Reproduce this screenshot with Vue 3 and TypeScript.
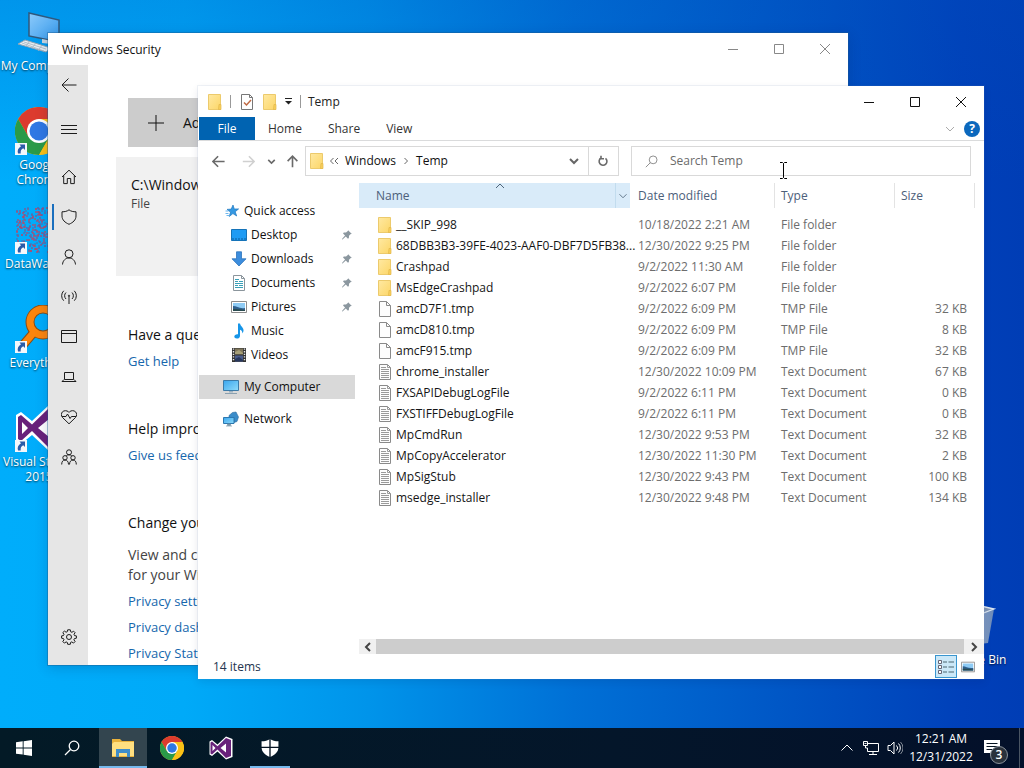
<script setup lang="ts">
import { ref } from 'vue'

interface FileRow {
  name: string
  date: string
  type: string
  size: string
  icon: 'folder' | 'blank' | 'text'
}

const folder = (name: string, date: string): FileRow => ({ name, date, type: 'File folder', size: '', icon: 'folder' })
const tmp = (name: string, date: string, size: string): FileRow => ({ name, date, type: 'TMP File', size, icon: 'blank' })
const text = (name: string, date: string, size: string): FileRow => ({ name, date, type: 'Text Document', size, icon: 'text' })

const files: FileRow[] = [
  folder('__SKIP_998', '10/18/2022 2:21 AM'),
  folder('68DBB3B3-39FE-4023-AAF0-DBF7D5FB38...', '12/30/2022 9:25 PM'),
  folder('Crashpad', '9/2/2022 11:30 AM'),
  folder('MsEdgeCrashpad', '9/2/2022 6:07 PM'),
  tmp('amcD7F1.tmp', '9/2/2022 6:09 PM', '32 KB'),
  tmp('amcD810.tmp', '9/2/2022 6:09 PM', '8 KB'),
  tmp('amcF915.tmp', '9/2/2022 6:09 PM', '32 KB'),
  text('chrome_installer', '12/30/2022 10:09 PM', '67 KB'),
  text('FXSAPIDebugLogFile', '9/2/2022 6:11 PM', '0 KB'),
  text('FXSTIFFDebugLogFile', '9/2/2022 6:11 PM', '0 KB'),
  text('MpCmdRun', '12/30/2022 9:53 PM', '32 KB'),
  text('MpCopyAccelerator', '12/30/2022 11:30 PM', '2 KB'),
  text('MpSigStub', '12/30/2022 9:43 PM', '100 KB'),
  text('msedge_installer', '12/30/2022 9:48 PM', '134 KB'),
]

const quick = [
  { label: 'Desktop', icon: 'desktop', pinned: true },
  { label: 'Downloads', icon: 'download', pinned: true },
  { label: 'Documents', icon: 'document', pinned: true },
  { label: 'Pictures', icon: 'picture', pinned: true },
  { label: 'Music', icon: 'music', pinned: false },
  { label: 'Videos', icon: 'video', pinned: false },
]

const shortcuts = [
  { label: 'My\u00a0Computer', icon: 'bigpc', link: false },
  { label: 'Google Chrome', icon: 'chrome', link: true },
  { label: 'DataWagers', icon: 'noise', link: true },
  { label: 'Everything', icon: 'everything', link: true },
  { label: 'Visual Studio 2015', icon: 'vs', link: true },
]

const sections = [
  { label: 'Home', icon: 'home' },
  { label: 'Virus & threat protection', icon: 'shield' },
  { label: 'Account protection', icon: 'person' },
  { label: 'Firewall', icon: 'antenna' },
  { label: 'App & browser control', icon: 'window' },
  { label: 'Device security', icon: 'laptop' },
  { label: 'Device health', icon: 'heart' },
  { label: 'Family options', icon: 'family' },
]

const query = ref('')
const selectedPlace = ref('My Computer')

// Deterministic scatter for the speckled shortcut icon
const scatter = (n: number) => {
  const v = Math.sin(n * 12.9898) * 43758.5453
  return v - Math.floor(v)
}
const specks = Array.from({ length: 300 }, (_, i) => ({
  x: 1 + Math.floor(scatter(i + 1) * 45),
  y: 1 + Math.floor(scatter(i + 701) * 45),
  c: ['#c8405c', '#8a4f88', '#4f6fb4', '#b04a6c'][i % 4],
}))
</script>

<template>
  <svg class="sprite" aria-hidden="true">
    <defs>
      <linearGradient id="g-folder" x1="0" y1="0" x2="1" y2="1"><stop offset="0" stop-color="#ffe9a2" /><stop offset="1" stop-color="#fcd668" /></linearGradient>
      <linearGradient id="g-screen" x1="0" y1="0" x2="1" y2="1"><stop offset="0" stop-color="#3ba6ee" /><stop offset="1" stop-color="#8fdcfb" /></linearGradient>
      <linearGradient id="g-pc" x1="0" y1="0" x2="1" y2="1"><stop offset="0" stop-color="#8ecbfb" /><stop offset="1" stop-color="#2f96ea" /></linearGradient>
      <linearGradient id="g-bin" x1="0" y1="0" x2="1" y2="0"><stop offset="0" stop-color="#c9d3df" /><stop offset="1" stop-color="#7e97b8" /></linearGradient>
    </defs>
    <symbol id="folder" viewBox="0 0 16 16"><path d="M1.500.5h12v15h-12z" fill="url(#g-folder)" stroke="#ecca6c" /><path d="M12 10.500h2v5h-2.500z" fill="#f9cf5c" stroke="#e3b84a" stroke-width=".7" /></symbol>
    <symbol id="blank" viewBox="0 0 16 16"><path d="M2.500.5h7l4 4v11h-11z" fill="#fdfdfd" stroke="#8a8a8a" /><path d="M9.500.5v4h4" fill="none" stroke="#8a8a8a" /></symbol>
    <symbol id="text" viewBox="0 0 16 16"><path d="M2.500.5h8l3 3v12h-11z" fill="#fdfdfd" stroke="#8a8a8a" /><path d="M10.500.5v3h3M4 3.500h5M4 5.500h8M4 7.500h8M4 9.500h8M4 11.500h8M4 13.500h8" fill="none" stroke="#9a9a9a" /></symbol>
    <symbol id="desktop" viewBox="0 0 16 16"><path d="M.5 2.500h15v11H.5z" fill="#1e9bf4" stroke="#1573b8" /><path d="M1 12h14" stroke="#0b5d9d" stroke-dasharray="2 1" /></symbol>
    <symbol id="download" viewBox="0 0 16 16"><path d="M5.500.8h5v7h4.500L8 15 1 7.800h4.500z" fill="#3c8ddd" stroke="#2c73bb" stroke-width=".8" /></symbol>
    <symbol id="document" viewBox="0 0 16 16"><path d="M2.500.5h8l3 3v12h-11z" fill="#fff" stroke="#8b959c" /><path d="M10.500.5v3h3" fill="none" stroke="#8b959c" /><path d="M4 4.500h4M4 6.500h3M8 6.500h4M4 8.500h8M4 10.500h3M8 10.500h4M4 12.500h8" stroke="#3aa0b8" /></symbol>
    <symbol id="picture" viewBox="0 0 16 16"><path d="M.5 2.500h15v11H.5z" fill="#fff" stroke="#8c8c8c" /><path d="M2 4h12v8H2z" fill="#8ecbf5" /><path d="M2 7c4 0 6 3 12 2v3H2z" fill="#2f5f8c" /><path d="M2 10c4 0 7 0 12 1v1H2z" fill="#294b50" /></symbol>
    <symbol id="music" viewBox="0 0 16 16"><path d="M7 .5h2c.5 3 4 4 3.500 7.500-.2 1-.6 1.800-1.200 2.500.3-2-.8-3.200-2.300-3.800V13c0 1.700-1.500 2.600-3.200 2.600-1.500 0-2.500-.8-2.500-2 0-1.600 1.700-2.600 3.700-2.300z" fill="#1695e8" /></symbol>
    <symbol id="video" viewBox="0 0 16 16"><path d="M1 1h14v14H1z" fill="#333" /><path d="M4 1.500h8v6H4z" fill="#7f765a" /><path d="M4 8.500h8v6H4z" fill="#4a5c8c" /><path d="M4 5l4-2 4 3v1H4z" fill="#a7a078" /><path d="M4 12l4-2 4 3v1H4z" fill="#27375c" /><path d="M2.500 1.500v13M13.500 1.500v13" stroke="#e8e8e8" stroke-width="1.400" stroke-dasharray="1.300 1.300" /></symbol>
    <symbol id="star" viewBox="0 0 16 16"><path d="M9 2l1.300 4 4.300-.1-3.400 2.900 1.500 4.200-3.800-2.400-3.600 2.900 1.200-4.400L3 6.400l4.200-.3z" fill="#3498e2" stroke="#1f78c0" stroke-width=".7" /><path d="M1.500 8h3M1.500 10.500h3M2.500 12.500h3" stroke="#6cb7ee" /></symbol>
    <symbol id="computer" viewBox="0 0 16 16"><path d="M.5 1.500h15v10H.5z" fill="url(#g-screen)" stroke="#3c7ba8" /><path d="M6 12h4v1.500H6z" fill="#9db2c0" /><path d="M2 14.500h12" stroke="#8aa0b0" /></symbol>
    <symbol id="network" viewBox="0 0 16 16"><path d="M6 4.500L9.500 1.500 13 1l2.500 5L14 10.500l-3 1V6.500H6z" fill="#3a8cc9" stroke="#2b6c9f" stroke-width=".6" /><path d="M.5 6.500h10.500v6H.5z" fill="url(#g-screen)" stroke="#2c78b0" /><path d="M4.500 13h3v1.500h-3zM3 15h6" fill="#7895a8" stroke="#7895a8" stroke-width=".7" /></symbol>
    <symbol id="pin" viewBox="0 0 16 16"><path d="M9.500 1.500l5 5-1.500.3-2.300 2.300-.2 3-1.200.9-2.900-2.900L2 14l-.7-.2.300-.9 3.800-4.400L2.700 6l1-1.200 3 0 2.400-2z" fill="#8b979f" /></symbol>

    <symbol id="home" viewBox="0 0 16 16"><path d="M1 8l7-6.800L15 8M2.700 6.600v8h3.600V9.500h3.400v5.100h3.600v-8" /></symbol>
    <symbol id="shield" viewBox="0 0 16 16"><path d="M8 .8c2 1.600 4.300 2 7 2V7c0 4-3 6.500-7 8.300C4 13.500 1 11 1 7V2.800c2.700 0 5-.4 7-2z" /></symbol>
    <symbol id="person" viewBox="0 0 16 16"><circle cx="8" cy="4.800" r="4" /><path d="M1.500 15.500c.3-4 3-6.500 6.500-6.500s6.200 2.500 6.500 6.500" /></symbol>
    <symbol id="antenna" viewBox="0 0 16 16"><path d="M8 7v8M5 3.500a4.500 4.500 0 0 0 0 6.500M11 3.500a4.500 4.500 0 0 1 0 6.500M2.700 1.800a7 7 0 0 0 0 9.900M13.300 1.800a7 7 0 0 1 0 9.900" /><circle cx="8" cy="6.700" r=".6" /></symbol>
    <symbol id="window" viewBox="0 0 16 16"><path d="M.5 1.500h15v12H.5zM.5 4.500h15" /></symbol>
    <symbol id="laptop" viewBox="0 0 16 16"><path d="M3.500 3.500h9v7h-9zM3 10.500l-2 2h14l-2-2" /></symbol>
    <symbol id="heart" viewBox="0 0 16 16"><path d="M8 14.800L1.500 8.500C0 6.800 0 4.300 1.500 2.800s4.300-1.400 6 0L8 3.300l.5-.5c1.700-1.500 4.500-1.500 6 0s1.500 4 0 5.700zM1 7.500h4L6.500 5l2.600 4.500 1.300-2H15" /></symbol>
    <symbol id="family" viewBox="0 0 16 16"><circle cx="8" cy="3.300" r="2.500" /><circle cx="4" cy="8.800" r="2.200" /><circle cx="12" cy="8.800" r="2.200" /><path d="M.7 15.500c0-3 1.300-4.500 3.300-4.500s3.500 1.500 3.500 4.500M8.500 15.500c0-3 1.500-4.500 3.500-4.500s3.300 1.500 3.300 4.500M5.300 6.800c.6-.7 1.500-1 2.700-1s2.100.3 2.700 1" /></symbol>
    <symbol id="gear" viewBox="0 0 16 16"><circle cx="8" cy="8" r="2.500" /><path d="M6.700.8h2.600l.4 2 1.200.5 1.700-1.100 1.500 1.500L13 5.300l.5 1.300 1.900.3v2.300l-2 .4-.5 1.200 1.200 1.700-1.600 1.600-1.700-1.200-1.200.5-.3 1.900H6.700l-.4-1.900-1.200-.5-1.700 1.200-1.600-1.600L3 10.800l-.5-1.200-1.900-.4V6.900l1.900-.4.500-1.200-1.200-1.700 1.600-1.500 1.700 1.100 1.200-.5z" /></symbol>

    <symbol id="bigpc" viewBox="0 0 48 48"><path d="M14 5l30 7v22l-30-6z" fill="url(#g-pc)" stroke="#30587c" stroke-width="1.500" /><path d="M27 31l10 2v3l-10-1z" fill="#c8d5df" /><path d="M10 32l26 8-5 4L3 36z" fill="#e9eef2" stroke="#90a4b4" /><path d="M9 34l22 7M7 35l22 8M15 33l-4 5M21 35l-4 5M27 37l-4 6" stroke="#a5b5c2" stroke-width=".8" /></symbol>
    <symbol id="chrome" viewBox="0 0 48 48"><circle cx="24" cy="24" r="24" fill="#fbc116" /><path d="M3.200 12A24 24 0 0 1 44.800 12H24L13.600 30z" fill="#dc3b2e" /><path d="M3.200 12A24 24 0 0 0 24 48L34.400 30H13.600z" fill="#2a9a48" /><path d="M24 12h20.800A24 24 0 0 1 24 48l10.400-18z" fill="#fbc116" /><circle cx="24" cy="24" r="12" fill="#fff" /><circle cx="24" cy="24" r="9.500" fill="#2f78e4" /></symbol>
    <symbol id="everything" viewBox="0 0 48 48"><circle cx="28" cy="17" r="13" fill="none" stroke="#8a4b12" stroke-width="9" /><path d="M20 26L8 40" stroke="#8a4b12" stroke-width="9" /><circle cx="28" cy="17" r="13" fill="none" stroke="#fb850c" stroke-width="7" /><path d="M20 26L9 39" stroke="#fb850c" stroke-width="7" /></symbol>
    <symbol id="vs" viewBox="0 0 48 48"><path d="M34 1l13 5v36l-13 5-17-16L6 40l-5-3V11l5-3 11 9z" fill="#fff" /><path d="M34 4l10 4v32l-10 4-17-17L6 37l-3-2V13l3-2 11 9.500zM7 18v12l6-6zM34 15L23 24l11 9z" fill="#68217a" fill-rule="evenodd" /></symbol>
    <symbol id="bin" viewBox="0 0 48 48"><path d="M8 6l22-2 13 3-6 34-16 2-8-4z" fill="url(#g-bin)" opacity=".85" /><path d="M8 6l22-2 13 3-16 6z" fill="#8095b4" stroke="#dce6f0" stroke-width="1.300" /></symbol>
    <symbol id="arrow-left" viewBox="0 0 16 16"><path d="M15.500 8H1.500M7.500 1.500L1 8l6.500 6.500" /></symbol>
    <symbol id="chevron" viewBox="0 0 16 16"><path d="M4 6l4 4 4-4" /></symbol>
    <symbol id="lens" viewBox="0 0 16 16"><circle cx="10" cy="6" r="4.800" /><path d="M6.500 9.500L1 15" /></symbol>
  </svg>

  <div class="screen">
    <main class="desktop">
      <div class="shortcuts">
        <button v-for="s in shortcuts" :key="s.label" class="shortcut">
          <span class="art">
            <svg v-if="s.icon === 'noise'" viewBox="0 0 48 48"><rect v-for="(p, i) in specks" :key="i" :x="p.x" :y="p.y" width="2" height="2" :fill="p.c" opacity=".6" /></svg>
            <svg v-else><use :href="'#' + s.icon" /></svg>
            <svg v-if="s.link" class="link-mark" viewBox="0 0 12 12"><path d="M0 0h12v12H0z" fill="#f4f7fb" /><path d="M4.500 1.500H10v5.500L8.200 5.300C6 6.500 5.500 8 5.700 10.500H3C2 7.500 3.300 4.800 6 3.200z" fill="#2a5ba8" /></svg>
          </span>
          <span class="caption">{{ s.label }}</span>
        </button>
      </div>
      <button class="shortcut bin">
        <span class="art"><svg><use href="#bin" /></svg></span>
        <span class="caption">Recycle Bin</span>
      </button>

      <section class="win security" aria-label="Windows Security">
        <header class="titlebar">
          <span class="title">Windows Security</span>
          <div class="controls">
            <button aria-label="Minimize"><svg viewBox="0 0 12 12"><path d="M1 6.500h10" /></svg></button>
            <button aria-label="Maximize"><svg viewBox="0 0 12 12"><path d="M1.500 1.500h9v9h-9z" /></svg></button>
            <button aria-label="Close"><svg viewBox="0 0 12 12"><path d="M1 1l10 10M11 1L1 11" /></svg></button>
          </div>
        </header>
        <div class="sec-body">
          <nav class="rail" aria-label="Sections">
            <button aria-label="Back"><svg><use href="#arrow-left" /></svg></button>
            <button class="menu" aria-label="Menu"><svg viewBox="0 0 16 16"><path d="M0 4.500h16M0 8.500h16M0 12.500h16" /></svg></button>
            <button v-for="s in sections" :key="s.icon" :class="{ current: s.icon === 'shield' }" :aria-label="s.label"><svg><use :href="'#' + s.icon" /></svg></button>
            <button class="settings" aria-label="Settings"><svg><use href="#gear" /></svg></button>
          </nav>
          <div class="sec-content">
            <button class="add"><svg viewBox="0 0 16 16"><path d="M8 0v16M0 8h16" /></svg>Add an exclusion</button>
            <div class="exclusion"><div class="path">C:\Windows\Temp</div><div class="kind">File</div></div>
            <div class="group">
              <h2>Have a question?</h2>
              <a href="#help">Get help</a>
            </div>
            <div class="group">
              <h2>Help improve Windows Security</h2>
              <a href="#feedback">Give us feedback</a>
            </div>
            <div class="group">
              <h2>Change your privacy settings</h2>
              <p>View and change privacy settings<br>for your Windows 10 device.</p>
              <a href="#settings">Privacy settings</a>
              <a href="#dashboard">Privacy dashboard</a>
              <a href="#statement">Privacy Statement</a>
            </div>
          </div>
        </div>
      </section>

      <section class="win explorer" aria-label="Temp">
        <header class="titlebar">
          <div class="quickbar">
            <svg><use href="#folder" /></svg>
            <i class="bar"></i>
            <button aria-label="Properties"><svg viewBox="0 0 16 16"><path d="M2.500.5h8l3 3v12h-11z" fill="#fff" stroke="#777" /><path d="M10.500.5v3h3" fill="none" stroke="#777" /><path d="M5 8.500L7.500 11 12 6" fill="none" stroke="#c06a44" stroke-width="1.500" /></svg></button>
            <button aria-label="New folder"><svg><use href="#folder" /></svg></button>
            <button class="more" aria-label="Customize"><svg viewBox="0 0 9 9"><path d="M1 1.500h7" stroke="#222" /><path d="M1 4h7L4.500 7.500z" fill="#222" /></svg></button>
            <i class="bar"></i>
          </div>
          <span class="title">Temp</span>
          <div class="controls">
            <button aria-label="Minimize"><svg viewBox="0 0 12 12"><path d="M1 6.500h10" /></svg></button>
            <button aria-label="Maximize"><svg viewBox="0 0 12 12"><path d="M1.500 1.500h9v9h-9z" /></svg></button>
            <button aria-label="Close"><svg viewBox="0 0 12 12"><path d="M1 1l10 10M11 1L1 11" /></svg></button>
          </div>
        </header>
        <div class="tabs">
          <button class="file">File</button>
          <button>Home</button>
          <button>Share</button>
          <button>View</button>
          <div class="tabs-end">
            <button class="expand" aria-label="Expand ribbon"><svg><use href="#chevron" /></svg></button>
            <button class="help" aria-label="Help">?</button>
          </div>
        </div>
        <div class="addressrow">
          <div class="travel">
            <button aria-label="Back"><svg><use href="#arrow-left" /></svg></button>
            <button class="off" aria-label="Forward"><svg viewBox="0 0 16 16"><path d="M1 8h13.500M8.500 1.500L15 8l-6.500 6.500" /></svg></button>
            <button class="recent" aria-label="Recent"><svg><use href="#chevron" /></svg></button>
            <button class="up" aria-label="Up"><svg viewBox="0 0 16 16"><path d="M8 15V2M2 7.500l6-6 6 6" /></svg></button>
          </div>
          <div class="address">
            <svg class="fold"><use href="#folder" /></svg>
            <svg class="sep wide" viewBox="0 0 10 10"><path d="M4.500 2l-3 3 3 3M9 2L6 5l3 3" /></svg>
            <button>Windows</button>
            <svg class="sep" viewBox="0 0 10 10"><path d="M3.500 2l3 3-3 3" /></svg>
            <button>Temp</button>
            <button class="drop" aria-label="Previous locations"><svg><use href="#chevron" /></svg></button>
            <button class="refresh" aria-label="Refresh"><svg viewBox="0 0 12 12"><path d="M8.500 3.300A3.900 3.900 0 1 1 4 3M4 .8v2.900h3" /></svg></button>
          </div>
          <label class="search">
            <svg><use href="#lens" /></svg>
            <input v-model="query" type="text" placeholder="Search Temp" aria-label="Search Temp">
          </label>
        </div>
        <div class="ex-body">
          <nav class="tree" aria-label="Places">
            <button class="place"><svg><use href="#star" /></svg>Quick access</button>
            <button v-for="q in quick" :key="q.label" class="place sub"><svg><use :href="'#' + q.icon" /></svg>{{ q.label }}<svg v-if="q.pinned" class="pin"><use href="#pin" /></svg></button>
            <button class="place root" :class="{ selected: selectedPlace === 'My Computer' }" @click="selectedPlace = 'My Computer'"><svg><use href="#computer" /></svg>My Computer</button>
            <button class="place root" :class="{ selected: selectedPlace === 'Network' }" @click="selectedPlace = 'Network'"><svg><use href="#network" /></svg>Network</button>
          </nav>
          <div class="list">
            <table>
              <colgroup><col><col class="c-date"><col class="c-type"><col class="c-size"></colgroup>
              <thead>
                <tr>
                  <th class="sorted" aria-sort="ascending">
                    <div class="name-head"><span>Name</span><button aria-label="Filter by name"><svg><use href="#chevron" /></svg></button></div>
                    <svg class="sort-mark" viewBox="0 0 10 6"><path d="M1 5l4-4 4 4" /></svg>
                  </th>
                  <th>Date modified</th>
                  <th>Type</th>
                  <th>Size</th>
                </tr>
              </thead>
              <tbody>
                <tr v-for="f in files" :key="f.name">
                  <td><div class="name"><svg><use :href="'#' + f.icon" /></svg>{{ f.name }}</div></td>
                  <td>{{ f.date }}</td>
                  <td>{{ f.type }}</td>
                  <td class="size">{{ f.size }}</td>
                </tr>
              </tbody>
            </table>
            <div class="scroll">
              <button class="left" aria-label="Scroll left"><svg><use href="#chevron" /></svg></button>
              <div class="thumb"></div>
              <button class="right" aria-label="Scroll right"><svg><use href="#chevron" /></svg></button>
            </div>
          </div>
        </div>
        <footer class="status">
          <span>14 items</span>
          <div class="views">
            <button class="on" aria-label="Details"><svg viewBox="0 0 16 16"><path d="M.5 1.500h3v3h-3zM.5 6.500h3v3h-3zM.5 11.500h3v3h-3z" fill="#fff" stroke="#667" /><path d="M5 3h4M10.500 3H16M5 8h4M10.500 8H16M5 13h4M10.500 13H16" stroke="#4c6670" stroke-width="1.200" /></svg></button>
            <button aria-label="Large icons"><svg><use href="#picture" /></svg></button>
          </div>
        </footer>
      </section>
      <svg class="cursor" viewBox="0 0 9 17"><path d="M1 .5h2.500l1 1 1-1H8M4.500 1.500v14M1 16.500h2.500l1-1 1 1H8" /></svg>
    </main>

    <footer class="taskbar">
      <button aria-label="Start"><svg class="start" viewBox="0 0 16 16"><path d="M0 2.300l6.700-1v6.200H0zM7.600 1.200L16 0v7.500H7.600zM0 8.400h6.700v6.200L0 13.700zM7.600 8.400H16V16l-8.400-1.200z" fill="#fff" /></svg></button>
      <button aria-label="Search"><svg class="find"><use href="#lens" /></svg></button>
      <div class="apps">
        <button class="active" aria-label="File Explorer"><svg viewBox="0 0 24 24"><path d="M1 3h8l2 2h12v16H1z" fill="#e9b23c" /><path d="M3 6h20v14H1V8z" fill="#ffdf80" /><path d="M5 13h14v8h-3v-4H8v4H5z" fill="#3f8dc9" /></svg></button>
        <button aria-label="Google Chrome"><svg><use href="#chrome" /></svg></button>
        <button aria-label="Visual Studio"><svg><use href="#vs" /></svg></button>
        <button class="open" aria-label="Windows Security"><svg class="guard" viewBox="0 0 16 16"><path d="M8 0c2 1.500 4.500 2 7.500 2v5c0 4.500-3 7-7.500 9C3.500 14 .5 11.500.5 7V2C3.500 2 6 1.500 8 0z" fill="#fff" /><path d="M8 0v16M0 7.500h16" stroke="#071524" stroke-width="1.200" /></svg></button>
      </div>
      <div class="tray">
        <button aria-label="Show hidden icons"><svg viewBox="0 0 16 16"><path d="M2.500 10.500L8 5l5.500 5.500" /></svg></button>
        <button aria-label="Network"><svg viewBox="0 0 16 16"><path d="M5 3.500h10.500v8H4.500V8M.5 1.500h4v4h-4zM2.500 5.500V8h2M10 11.500v3M6 14.500h8M1.500 3.500h2" /></svg></button>
        <button aria-label="Volume"><svg viewBox="0 0 16 16"><path d="M1 5.500h2.500L7 2v12l-3.500-3.500H1zM9.500 5.500a3.500 3.500 0 0 1 0 5M11.500 3.500a6.500 6.500 0 0 1 0 9" /><path d="M13.500 2a8.500 8.500 0 0 1 0 12" opacity=".5" /></svg></button>
        <button class="clock"><time>12:21 AM</time><time>12/31/2022</time></button>
        <button class="notes" aria-label="3 notifications"><svg viewBox="0 0 16 16"><path d="M0 0h16v13h-6l-4 3v-3H0z" fill="#fff" stroke="none" /><path d="M2.500 3.500h11M2.500 6.500h11M2.500 9.500h7" stroke="#071422" /></svg><span class="badge">3</span></button>
        <button class="peek" aria-label="Show desktop"></button>
      </div>
    </footer>
  </div>
</template>

<style>
html,
body,
#app {
  height: 100%;
}
body {
  margin: 0;
  overflow: hidden;
}
</style>

<style scoped>
.sprite {
  position: absolute;
  width: 0;
  height: 0;
}
.screen {
  display: flex;
  flex-direction: column;
  height: 100vh;
  font: 12px/16px "Open Sans", "Noto Sans", sans-serif;
  color: #111;
}
button {
  display: flex;
  align-items: center;
  justify-content: center;
  flex: none;
  margin: 0;
  padding: 0;
  border: 0;
  background: none;
  color: inherit;
  font: inherit;
  white-space: nowrap;
}
svg {
  display: block;
  flex: none;
  width: 16px;
  height: 16px;
}
a {
  color: #1667ad;
  text-decoration: none;
}
h2,
p {
  margin: 0;
}

/* Desktop */
.desktop {
  position: relative;
  flex: 1;
  min-height: 0;
  overflow: hidden;
  background:
    linear-gradient(180deg, rgba(0, 80, 190, 0.25) 0%, rgba(0, 80, 190, 0) 25%),
    linear-gradient(90deg, #00adfb 0%, #00aaf8 18%, #0094ea 36%, #0070d6 56%, #0057c6 76%, #0040b9 94%, #003db5 100%);
}
.shortcuts {
  display: flex;
  flex-direction: column;
  width: 78px;
}
.shortcut {
  flex-direction: column;
  justify-content: flex-start;
  box-sizing: border-box;
  width: 78px;
  height: 99px;
  padding-top: 8px;
  color: #fff;
  text-shadow: 0 1px 2px rgba(0, 0, 0, 0.7);
}
.shortcut.bin {
  position: absolute;
  right: 10px;
  bottom: 35px;
}
.art {
  position: relative;
  width: 48px;
  height: 48px;
}
.art svg {
  width: 48px;
  height: 48px;
}
.art .link-mark {
  position: absolute;
  left: 0;
  bottom: 0;
  width: 12px;
  height: 12px;
}
.caption {
  width: 78px;
  padding-top: 2px;
  line-height: 15px;
  text-align: center;
  white-space: normal;
}

/* Windows */
.win {
  position: absolute;
  display: flex;
  flex-direction: column;
  background: #fff;
}
.titlebar {
  display: flex;
  align-items: center;
}
.controls {
  display: flex;
  align-self: stretch;
  margin-left: auto;
}
.controls button {
  width: 46px;
}
.controls svg {
  width: 12px;
  height: 12px;
  fill: none;
  stroke: #111;
}

/* Security */
.security {
  top: 33px;
  right: 176px;
  bottom: 63px;
  left: 48px;
  box-shadow: 0 0 0 1px rgba(30, 90, 140, 0.4), 0 3px 12px rgba(0, 30, 80, 0.2);
}
.security .titlebar {
  height: 32px;
  padding-left: 14px;
}
.security .title {
  padding-top: 2px;
}
.security .controls svg {
  stroke: #888;
}
.sec-body {
  display: flex;
  flex: 1;
  min-height: 0;
  overflow: hidden;
}
.rail {
  display: flex;
  flex-direction: column;
  box-sizing: border-box;
  width: 40px;
  padding-bottom: 8px;
  background: #e6e6e6;
}
.rail button {
  height: 40px;
  padding: 0 2px;
  border-left: 2px solid transparent;
}
.rail .menu {
  margin: 4px 0 8px;
}
.rail .current {
  border-image: linear-gradient(transparent 20%, #1a6fbe 20%, #1a6fbe 80%, transparent 80%) 1;
  margin-left: 4px;
  padding: 0 4px 0 0;
  border-width: 0 0 0 2px;
}
.rail .settings {
  margin-top: auto;
}
.rail svg {
  fill: none;
  stroke: #1c1c1c;
}
.sec-content {
  flex: 1;
  padding: 33px 28px 0;
  font-size: 14px;
  line-height: 20px;
  white-space: nowrap;
}
.add {
  gap: 19px;
  height: 49px;
  margin-left: 12px;
  padding: 0 20px;
  background: #ccc;
}
.add svg {
  fill: none;
  stroke: #111;
}
.exclusion {
  height: 101px;
  margin: 10px 0 49px;
  padding: 18px 15px 0;
  background: #f1f1f1;
}
.kind {
  font-size: 12px;
  line-height: 18px;
  color: #444;
}
.group {
  display: flex;
  flex-direction: column;
  gap: 6px;
  padding: 0 12px;
  margin-bottom: 48px;
}
.group a {
  font-size: 13px;
}
h2 {
  font-size: 14px;
  font-weight: 400;
  line-height: 20px;
}
.group p {
  padding-top: 6px;
  color: #444;
}

/* Explorer */
.explorer {
  top: 86px;
  right: 40px;
  bottom: 49px;
  left: 198px;
  box-shadow: 0 0 0 1px rgba(120, 150, 190, 0.1), 0 3px 8px rgba(0, 20, 70, 0.1);
}
.explorer .titlebar {
  height: 31px;
}
.quickbar {
  display: flex;
  align-items: center;
  gap: 7px;
  margin: 0 6px 0 9px;
}
.quickbar .bar {
  width: 1px;
  height: 13px;
  margin-right: 1px;
  background: #999;
}
.quickbar .more svg {
  width: 9px;
  height: 9px;
}
.quickbar .more {
  margin-left: -1px;
}
.explorer .title {
  color: #222;
}
.tabs {
  display: flex;
  height: 23px;
  border-bottom: 1px solid #dadbdc;
  color: #333;
}
.tabs > button {
  padding: 0 13px;
}
.tabs .file {
  width: 56px;
  margin-left: 1px;
  background: #0063b1;
  color: #fff;
}
.tabs-end {
  display: flex;
  align-items: center;
  gap: 6px;
  margin-left: auto;
  padding-right: 4px;
}
.expand svg {
  fill: none;
  stroke: #aaa;
}
.help {
  width: 16px;
  height: 16px;
  border-radius: 50%;
  background: #0b68bd;
  color: #fff;
  font-size: 12px;
  font-weight: 700;
}
.addressrow {
  display: flex;
  gap: 12px;
  height: 30px;
  padding: 5px 13px 7px 0;
}
.travel {
  display: flex;
  align-items: center;
  width: 95px;
}
.travel button {
  width: 30px;
}
.travel button:first-child {
  margin-left: 5px;
}
.travel .recent {
  width: 16px;
}
.travel .up {
  width: 26px;
}
.travel svg {
  width: 13px;
  height: 13px;
  fill: none;
  stroke: #6a6a6a;
  stroke-width: 2;
}
.travel .off svg {
  stroke: #d0d0d0;
}
.address,
.search {
  display: flex;
  align-items: center;
  box-sizing: border-box;
  border: 1px solid #d9d9d9;
}
.address {
  flex: 1;
  padding-left: 3px;
}
.search {
  flex: none;
  width: 44%;
}
.address .sep {
  width: 10px;
  height: 10px;
  margin: 0 5px;
  fill: none;
  stroke: #666;
}
.address .wide {
  margin: 0 6px 0 4px;
}
.address .drop {
  width: 28px;
  margin-left: auto;
}
.address .drop svg {
  fill: none;
  stroke: #666;
  stroke-width: 2;
}
.address .refresh {
  align-self: stretch;
  width: 30px;
  border-left: 1px solid #d9d9d9;
}
.refresh svg {
  width: 12px;
  height: 12px;
  fill: none;
  stroke: #6a6a6a;
  stroke-width: 1.6;
}
.search {
  gap: 12px;
  padding: 0 13px;
}
.search svg {
  width: 13px;
  height: 13px;
  fill: none;
  stroke: #777;
}
.search input {
  flex: 1;
  min-width: 0;
  padding: 0;
  border: 0;
  outline: 0;
  background: none;
  color: #333;
  font: inherit;
}
.search input::placeholder {
  color: #6b6b6b;
  opacity: 1;
}
.ex-body {
  display: flex;
  flex: 1;
  min-height: 0;
}
.tree {
  display: flex;
  flex-direction: column;
  width: 156px;
  padding: 16px 4px 0 1px;
}
.place {
  justify-content: flex-start;
  gap: 4px;
  height: 24px;
  padding-left: 25px;
}
.place.sub {
  padding-left: 32px;
}
.place.root {
  margin-top: 8px;
  padding-left: 24px;
  gap: 5px;
}
.place.selected {
  background: #d9d9d9;
}
.place .pin {
  width: 12px;
  height: 12px;
  margin: 0 2px 0 auto;
}
.list {
  display: flex;
  flex: 1;
  flex-direction: column;
  min-width: 0;
}
table {
  width: calc(100% - 9px);
  border-spacing: 0;
  table-layout: fixed;
  color: #6d6d6d;
}
.c-date {
  width: 145px;
}
.c-type {
  width: 120px;
}
.c-size {
  width: 80px;
}
th {
  position: relative;
  height: 25px;
  padding: 0 0 0 6px;
  border-right: 1px solid #e3e3e3;
  color: #4c607a;
  font-weight: 400;
  text-align: left;
}
th.sorted {
  padding: 0;
  border: 0;
  background: #d9ebf9;
}
.name-head {
  display: flex;
  align-items: center;
  justify-content: space-between;
  padding-left: 17px;
}
.name-head button {
  width: 15px;
  height: 25px;
  border-left: 1px solid #c2dcee;
}
.name-head svg,
.sort-mark {
  fill: none;
  stroke: #51677c;
}
.name-head svg {
  width: 14px;
}
.sort-mark {
  position: absolute;
  top: 0;
  left: 50%;
  width: 10px;
  height: 6px;
}
tbody::before {
  content: "";
  display: block;
  height: 6px;
}
td {
  height: 21px;
  padding: 0 0 0 6px;
  white-space: nowrap;
}
td:first-child {
  padding-left: 18px;
  color: #151515;
}
.name {
  display: flex;
  align-items: center;
  gap: 3px;
}
td.size {
  padding-right: 8px;
  text-align: right;
}
th:nth-child(2),
td:nth-child(2) {
  padding-left: 8px;
}
.scroll {
  display: flex;
  height: 15px;
  margin-top: auto;
  background: #f0f0f0;
}
.scroll button {
  width: 17px;
}
.scroll .right {
  width: 20px;
}
.scroll svg {
  fill: none;
  stroke: #444;
  stroke-width: 2;
}
.scroll .left svg {
  transform: rotate(90deg);
}
.scroll .right svg {
  transform: rotate(-90deg);
}
.thumb {
  flex: 1;
  background: #cdcdcd;
}
.status {
  display: flex;
  align-items: center;
  justify-content: space-between;
  height: 25px;
  padding: 0 5px 0 15px;
  color: #23344f;
}
.views {
  display: flex;
}
.views button {
  box-sizing: border-box;
  width: 22px;
  height: 23px;
}
.views svg {
  width: 14px;
  height: 14px;
}
.views .on {
  border: 1px solid #3a96cf;
  background: #cbe8f8;
}
.views .on svg {
  width: 16px;
  height: 16px;
}
.cursor {
  position: absolute;
  top: 162px;
  left: 779px;
  width: 9px;
  height: 17px;
  fill: none;
  stroke: #000;
}

/* Taskbar */
.taskbar {
  display: flex;
  height: 40px;
  background: linear-gradient(90deg, #031a26, #04162a 60%, #03102a);
  color: #fff;
}
.taskbar > button {
  width: 48px;
}
.find {
  fill: none;
  stroke: #fff;
  stroke-width: 1.3;
}
.apps {
  display: flex;
  gap: 1px;
  margin-left: 3px;
}
.apps button {
  box-sizing: border-box;
  width: 48px;
  padding-top: 2px;
  border-bottom: 2px solid transparent;
}
.apps svg {
  width: 24px;
  height: 24px;
}
.apps .guard {
  width: 18px;
  height: 18px;
}
.apps .active {
  border-color: #76b9ed;
  background: #33454f;
}
.apps .open {
  width: 40px;
  margin-left: 4px;
  border-color: #76b9ed;
}
.tray {
  display: flex;
  margin-left: auto;
}
.tray button {
  width: 24px;
}
.tray svg {
  fill: none;
  stroke: #fff;
}
.tray .clock {
  flex-direction: column;
  width: 68px;
  line-height: 18px;
}
.tray .notes {
  position: relative;
  width: 34px;
  margin-right: 10px;
}
.badge {
  position: absolute;
  right: 1px;
  bottom: 4px;
  width: 16px;
  height: 16px;
  border: 1px solid #8a929b;
  border-radius: 50%;
  background: #2a323c;
  font-size: 12px;
  font-weight: 600;
  line-height: 16px;
  text-align: center;
}
.tray .peek {
  width: 5px;
  border-left: 1px solid #4a5563;
}
</style>
